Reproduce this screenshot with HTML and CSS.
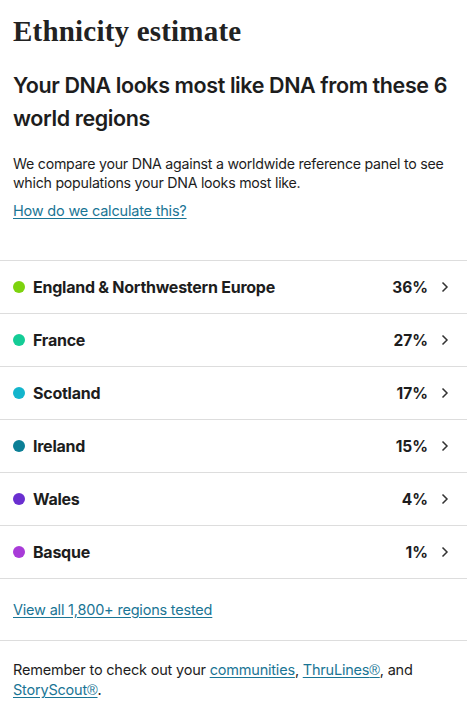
FILE: index.html
```html
<!DOCTYPE html>
<html lang="en">
<head>
  <meta charset="UTF-8" />
  <meta name="viewport" content="width=device-width, initial-scale=1.0" />
  <title>Ethnicity estimate</title>
  <link rel="stylesheet" href="styles.css">
</head>
<body>
  <div class="intro">
    <h1>Ethnicity estimate</h1>
    <h2>Your DNA looks most like DNA from these 6 world regions</h2>
    <p>We compare your DNA against a worldwide reference panel to see which populations your DNA looks most like.</p>
    <a href="#" class="link">How do we calculate this?</a>
  </div>

  <ul class="regions">
    <li class="region">
      <span class="dot" style="background:#7dd30e"></span>
      <span class="name">England &amp; Northwestern Europe</span>
      <span class="pct">36%</span>
      <svg class="chev" width="8" height="12" viewBox="0 0 8 12"><path d="M1.5 1.5l4.5 4.5-4.5 4.5" fill="none" stroke="#333" stroke-width="1.5"/></svg>
    </li>
    <li class="region">
      <span class="dot" style="background:#14cc96"></span>
      <span class="name">France</span>
      <span class="pct">27%</span>
      <svg class="chev" width="8" height="12" viewBox="0 0 8 12"><path d="M1.5 1.5l4.5 4.5-4.5 4.5" fill="none" stroke="#333" stroke-width="1.5"/></svg>
    </li>
    <li class="region">
      <span class="dot" style="background:#13b5cc"></span>
      <span class="name">Scotland</span>
      <span class="pct">17%</span>
      <svg class="chev" width="8" height="12" viewBox="0 0 8 12"><path d="M1.5 1.5l4.5 4.5-4.5 4.5" fill="none" stroke="#333" stroke-width="1.5"/></svg>
    </li>
    <li class="region">
      <span class="dot" style="background:#0b7f96"></span>
      <span class="name">Ireland</span>
      <span class="pct">15%</span>
      <svg class="chev" width="8" height="12" viewBox="0 0 8 12"><path d="M1.5 1.5l4.5 4.5-4.5 4.5" fill="none" stroke="#333" stroke-width="1.5"/></svg>
    </li>
    <li class="region">
      <span class="dot" style="background:#6a2fd0"></span>
      <span class="name">Wales</span>
      <span class="pct">4%</span>
      <svg class="chev" width="8" height="12" viewBox="0 0 8 12"><path d="M1.5 1.5l4.5 4.5-4.5 4.5" fill="none" stroke="#333" stroke-width="1.5"/></svg>
    </li>
    <li class="region">
      <span class="dot" style="background:#a83bd8"></span>
      <span class="name">Basque</span>
      <span class="pct">1%</span>
      <svg class="chev" width="8" height="12" viewBox="0 0 8 12"><path d="M1.5 1.5l4.5 4.5-4.5 4.5" fill="none" stroke="#333" stroke-width="1.5"/></svg>
    </li>
  </ul>

  <div class="view-all">
    <a href="#" class="link">View all 1,800+ regions tested</a>
  </div>

  <p class="reminder">Remember to check out your <a href="#" class="link">communities</a>, <a href="#" class="link">ThruLines<span class="reg">®</span></a>, and <a href="#" class="link">StoryScout<span class="reg">®</span></a>.</p>
</body>
</html>
```

FILE: styles.css
```css
* {
  box-sizing: border-box;
  margin: 0;
  padding: 0;
}
body {
  font-family: 'Inter', 'Liberation Sans', sans-serif;
  color: #1d1d1d;
  background: #fff;
  width: 467px;
}
.intro {
  padding: 13px 13px 0;
}
h1 {
  font-family: 'Liberation Serif', serif;
  font-size: 29px;
  font-weight: 600;
  line-height: 36px;
  letter-spacing: 0.2px;
  color: #222;
}
h2 {
  font-size: 21.5px;
  font-weight: 600;
  line-height: 33px;
  letter-spacing: -0.4px;
  margin-top: 20px;
}
.intro p {
  font-size: 14.2px;
  line-height: 19px;
  margin-top: 19px;
  letter-spacing: -0.25px;
}
.link {
  color: #1a7595;
  text-decoration: underline;
  text-underline-offset: 2px;
}
.intro .link {
  display: inline-block;
  font-size: 14.5px;
  margin-top: 10px;
  letter-spacing: -0.2px;
}
.regions {
  list-style: none;
  margin-top: 40px;
  border-top: 1px solid #ddd;
}
.region {
  display: flex;
  align-items: center;
  height: 53px;
  padding: 0 18px 0 13px;
  border-bottom: 1px solid #ddd;
}
.dot {
  width: 12px;
  height: 12px;
  border-radius: 50%;
  margin-right: 8px;
  flex-shrink: 0;
}
.name {
  flex: 1;
  font-size: 16px;
  font-weight: 650;
  letter-spacing: -0.25px;
}
.pct {
  font-size: 15.5px;
  font-weight: 650;
  margin-right: 13px;
}
.chev {
  display: block;
}
.view-all {
  padding: 22px 13px 22px;
  font-size: 14.5px;
  letter-spacing: -0.2px;
  border-bottom: 1px solid #ddd;
}
.reminder {
  padding: 19px 13px;
  font-size: 14.5px;
  line-height: 20px;
  letter-spacing: -0.2px;
}
.reg {
  font-family: 'Liberation Sans', sans-serif;
}
```
